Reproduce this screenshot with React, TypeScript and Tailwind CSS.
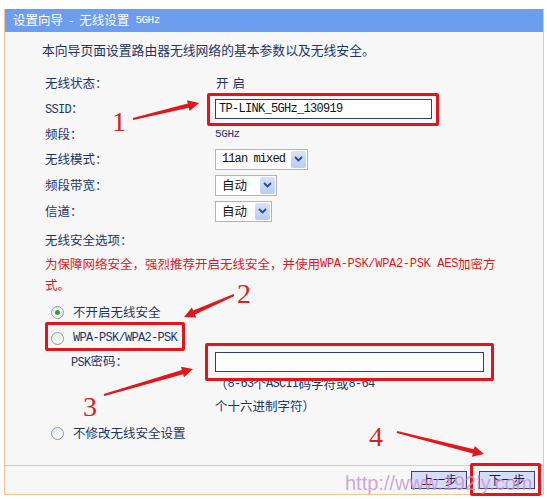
import React from "react";

const mono = "font-['Liberation_Mono','Noto_Sans_CJK_SC',monospace]";

type Pt = { x1: number; y1: number; x2: number; y2: number };

// tapered red annotation arrow
function arrowPoints({ x1, y1, x2, y2 }: Pt) {
  const dx = x2 - x1;
  const dy = y2 - y1;
  const len = Math.hypot(dx, dy);
  const ux = dx / len;
  const uy = dy / len;
  const nx = -uy;
  const ny = ux;
  const head = 11;
  const bx = x2 - ux * head;
  const by = y2 - uy * head;
  const p = (x: number, y: number, w: number) => `${x + nx * w},${y + ny * w}`;
  return [
    p(x1, y1, 1),
    p(bx, by, 2.2),
    p(bx, by, 5.5),
    `${x2},${y2}`,
    p(bx, by, -5.5),
    p(bx, by, -2.2),
    p(x1, y1, -1),
  ].join(" ");
}

function Radio({ checked }: { checked?: boolean }) {
  return (
    <span className="flex h-[13px] w-[13px] shrink-0 items-center justify-center rounded-full border border-[#8a9bb2] bg-gradient-to-br from-[#e4e6ea] to-white">
      {checked && <span className="h-[5px] w-[5px] rounded-full bg-[#2aa52a]" />}
    </span>
  );
}

function Select({ text, width, isMono }: { text: string; width: string; isMono?: boolean }) {
  return (
    <div className={`flex h-[21px] items-center justify-between border border-[#a7b5c9] bg-white pl-[6px] pr-[1px] ${width}`}>
      <span className={isMono ? `${mono} text-[12px] tracking-[-0.9px] text-[#111]` : "text-[12.5px] text-[#111]"}>{text}</span>
      <span className="flex h-[17px] w-[15px] items-center justify-center rounded-[2px] bg-gradient-to-b from-[#d6e2fb] to-[#b7cbf5]">
        <svg width="9" height="6" viewBox="0 0 9 6">
          <path d="M1 1 L4.5 4.5 L8 1" fill="none" stroke="#2b4a8a" strokeWidth="1.8" />
        </svg>
      </span>
    </div>
  );
}

function Row({ label, h, children }: { label: React.ReactNode; h: string; children?: React.ReactNode }) {
  return (
    <div className={`flex items-center ${h}`}>
      <div className="w-[170px] shrink-0">{label}</div>
      <div className="flex items-center">{children}</div>
    </div>
  );
}

export default function App() {
  const arrows: Pt[] = [
    { x1: 133, y1: 119, x2: 199, y2: 103 },
    { x1: 234, y1: 295, x2: 184, y2: 317 },
    { x1: 104, y1: 395, x2: 193, y2: 369 },
    { x1: 397, y1: 432, x2: 484, y2: 454 },
  ];

  return (
    <div className="relative h-[499px] w-[547px] overflow-hidden bg-white font-['Noto_Sans_CJK_SC',sans-serif] text-[12.5px] text-[#1d3566]">
      <div className="ml-[4px] mt-[9px] w-[540px] border-x border-b border-[#f2c48f]">
        {/* ===== Title ===== */}
        <div className="flex h-[23px] items-center gap-[6px] bg-[#6c9def] pl-[8px] leading-none text-white">
          <span>设置向导</span>
          <span>-</span>
          <span>无线设置</span>
          <span className={`${mono} text-[11px] tracking-[-0.5px]`}>5GHz</span>
        </div>

        {/* ===== Body ===== */}
        <div className="h-[433px] bg-[#f7f7f7] pl-[40px]">
          <p className="-ml-[3px] pt-[9px] text-[12.8px] leading-[18px]">
            本向导页面设置路由器无线网络的基本参数以及无线安全。
          </p>

          <div className="mt-[11px]">
            <Row label="无线状态：" h="h-[26px]">
              <span className="pl-[1px] tracking-[4px]">开启</span>
            </Row>
            <Row label={<span><span className={`${mono} text-[12px] tracking-[-0.7px]`}>SSID</span>：</span>} h="h-[26px]">
              <div className="flex h-[20px] w-[217px] items-center border border-[#2d3f6e] bg-white pl-[3px]">
                <span className={`${mono} text-[12px] tracking-[-0.7px] text-[#111]`}>TP-LINK_5GHz_130919</span>
              </div>
            </Row>
            <Row label="频段：" h="h-[24px]">
              <span className={`${mono} text-[11px] tracking-[-0.4px]`}>5GHz</span>
            </Row>
            <Row label="无线模式：" h="h-[26px]">
              <Select text="11an mixed" width="w-[93px]" isMono />
            </Row>
            <Row label="频段带宽：" h="h-[26px]">
              <Select text="自动" width="w-[62px]" />
            </Row>
            <Row label="信道：" h="h-[26px]">
              <Select text="自动" width="w-[57px]" />
            </Row>
          </div>

          <div className="mt-[5px] flex h-[22px] items-center">无线安全选项：</div>
          <div className="mt-[2.5px] text-[#e3171b]">
            <div className="flex h-[21px] items-center whitespace-nowrap">
              为保障网络安全，强烈推荐开启无线安全，并使用
              <span className={`${mono} text-[12px] tracking-[-0.3px]`}>WPA-PSK/WPA2-PSK AES</span>
              加密方
            </div>
            <div className="flex h-[21px] items-center">式。</div>
          </div>

          <div className="mt-[3.5px] flex h-[26px] items-center gap-[9px] pl-[6px]">
            <Radio checked />
            <span>不开启无线安全</span>
          </div>
          <div className="flex h-[26px] items-center gap-[9px] pl-[6px]">
            <Radio />
            <span className={`${mono} text-[12px] tracking-[-0.7px]`}>WPA-PSK/WPA2-PSK</span>
          </div>
          <div className="flex h-[22px] items-center">
            <div className="w-[170px] shrink-0 pl-[26px]">
              <span className={`${mono} text-[12px] tracking-[-0.7px]`}>PSK</span>密码：
            </div>
            <div className="h-[20px] w-[269px] border border-[#2d3f6e] bg-white" />
          </div>
          <div className="pl-[170px]">
            <div className="flex h-[22px] items-center whitespace-nowrap">
              （<span className={`${mono} text-[12px] tracking-[-0.7px]`}>8-63</span>个
              <span className={`${mono} text-[12px] tracking-[-0.7px]`}>ASCII</span>码字符或
              <span className={`${mono} text-[12px] tracking-[-0.7px]`}>8-64</span>
            </div>
            <div className="flex h-[22px] items-center">个十六进制字符）</div>
          </div>
          <div className="mt-[3px] flex h-[26px] items-center gap-[9px] pl-[6px]">
            <Radio />
            <span>不修改无线安全设置</span>
          </div>
        </div>

        {/* ===== Footer ===== */}
        <div className="flex h-[29px] items-center justify-end gap-[12px] border-t border-[#f2c48f] bg-[#f7f7f7] pr-[8px]">
          <button className="flex h-[18px] w-[56px] items-center justify-center border border-[#3a4668] bg-[#d5dbfa] text-[12px] leading-none text-[#1b1b3a]">
            上一步
          </button>
          <button className="flex h-[18px] w-[56px] items-center justify-center border border-[#3a4668] bg-[#d5dbfa] text-[12px] leading-none text-[#1b1b3a]">
            下一步
          </button>
        </div>
      </div>

      {/* ===== Annotations ===== */}
      <div className="pointer-events-none absolute left-[207px] top-[93px] h-[33px] w-[232px] rounded-[2px] border-[3px] border-[#e3141a]" />
      <div className="pointer-events-none absolute left-[45px] top-[322px] h-[29px] w-[140px] rounded-[2px] border-[3px] border-[#e3141a]" />
      <div className="pointer-events-none absolute left-[205px] top-[343px] h-[38px] w-[289px] rounded-[2px] border-[3px] border-[#e3141a]" />
      <div className="pointer-events-none absolute left-[470px] top-[463px] h-[33px] w-[71px] rounded-[2px] border-[3px] border-[#e3141a]" />

      <svg className="pointer-events-none absolute left-0 top-0" width="547" height="499">
        {arrows.map((a, i) => (
          <polygon key={i} points={arrowPoints(a)} fill="#e3171b" />
        ))}
      </svg>

      <span className="absolute left-[112px] top-[108px] font-['Liberation_Serif',serif] text-[28px] leading-none text-[#d9201f]">1</span>
      <span className="absolute left-[237px] top-[280px] font-['Liberation_Serif',serif] text-[28px] leading-none text-[#d9201f]">2</span>
      <span className="absolute left-[83px] top-[393px] font-['Liberation_Serif',serif] text-[28px] leading-none text-[#d9201f]">3</span>
      <span className="absolute left-[369px] top-[423px] font-['Liberation_Serif',serif] text-[28px] leading-none text-[#d9201f]">4</span>

      <span className="pointer-events-none absolute left-[345px] top-[473px] font-['Liberation_Sans',sans-serif] text-[20px] leading-none text-[#c98fd0]/80">
        http://www.192ly.com
      </span>
    </div>
  );
}
